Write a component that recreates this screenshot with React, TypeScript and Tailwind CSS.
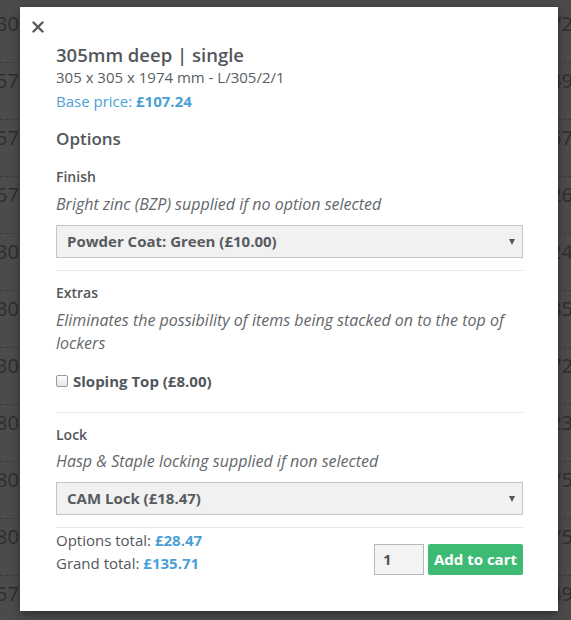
import React from "react";

const leftCol = ["305", "57", "57", "57", "305", "305", "305", "80", "80", "80", "57"];
const rightCol = ["72", "49", "57", "26", "24", "35", "72", "23", "75", "75", "49"];

function Backdrop() {
  return (
    <div className="flex flex-col pt-[6px]">
      {leftCol.map((l, i) => (
        <div
          key={i}
          className="flex h-[57px] items-start justify-between border-b border-dashed border-[#3a3a3a] px-0 pt-[3px] text-[20px] text-[#2e2e2e]"
        >
          <span className="-ml-[4px]">{l}</span>
          <span className="-mr-[2px]">{rightCol[i]}</span>
        </div>
      ))}
    </div>
  );
}

function Select({ label }: { label: string }) {
  return (
    <div className="relative flex h-[33px] items-center border border-[#c4c4c4] bg-[#f1f1f1] pl-[10px] text-[15px] font-bold text-[#575b5f]">
      <span>{label}</span>
      <span className="absolute right-[7px] top-[13px] h-0 w-0 border-x-[3.5px] border-t-[6px] border-x-transparent border-t-[#555]" />
    </div>
  );
}

export default function App() {
  return (
    <div
      className="relative h-[620px] w-[571px] overflow-hidden bg-[#4b4b4b]"
      style={{ fontFamily: '"Open Sans", "Liberation Sans", sans-serif' }}
    >
      <Backdrop />
      <div className="absolute left-[20px] top-[7px] h-[604px] w-[538px] bg-white text-[#53575b] shadow-[0_3px_9px_rgba(0,0,0,0.4)]">
        <button className="absolute left-[7px] top-[9px] flex h-[22px] w-[22px] items-center justify-center">
          <svg width="12" height="12" viewBox="0 0 12 12">
            <path d="M1.5 1.5 L10.5 10.5 M10.5 1.5 L1.5 10.5" stroke="#55595d" strokeWidth="2.4" strokeLinecap="round" />
          </svg>
        </button>
        <div className="flex flex-col pl-[36px] pr-[35px] pt-[37px]">
          <h2 className="text-[18.5px] font-semibold leading-[22px] text-[#53575b]">305mm deep | single</h2>
          <div className="mt-[1px] text-[15px] leading-[20px] text-[#5a5e62]">305 x 305 x 1974 mm - L/305/2/1</div>
          <div className="mt-[4px] text-[15px] leading-[20px] text-[#4a9fd5]">
            Base price: <span className="font-bold">£107.24</span>
          </div>
          <h3 className="mt-[16px] text-[17px] font-semibold leading-[24px]">Options</h3>

          <div className="mt-[16px] text-[14px] font-semibold leading-[20px]">Finish</div>
          <div className="mt-[6px] text-[16px] italic leading-[22px] text-[#63676b]">
            Bright zinc (BZP) supplied if no option selected
          </div>
          <div className="mt-[10px]">
            <Select label="Powder Coat: Green (£10.00)" />
          </div>
          <div className="mt-[12px] h-px bg-[#e6e6e6]" />

          <div className="mt-[12px] text-[14px] font-semibold leading-[20px]">Extras</div>
          <div className="mt-[6px] text-[16px] italic leading-[23px] text-[#63676b]">
            Eliminates the possibility of items being stacked on to the top of lockers
          </div>
          <label className="mt-[16px] flex h-[20px] items-center gap-[5px]">
            <span className="h-[12px] w-[12px] rounded-[2px] border border-[#9a9a9a] bg-gradient-to-b from-white to-[#e4e4e4]" />
            <span className="text-[15px] font-bold">Sloping Top (£8.00)</span>
          </label>
          <div className="mt-[21px] h-px bg-[#e6e6e6]" />

          <div className="mt-[12px] text-[14px] font-semibold leading-[20px]">Lock</div>
          <div className="mt-[5px] text-[16px] italic leading-[22px] text-[#63676b]">
            Hasp &amp; Staple locking supplied if non selected
          </div>
          <div className="mt-[10px]">
            <Select label="CAM Lock (£18.47)" />
          </div>
          <div className="mt-[12px] h-px bg-[#e6e6e6]" />

          <div className="mt-[1px] flex items-end justify-between">
            <div className="flex flex-col text-[15px] leading-[23px]">
              <div>
                Options total: <span className="font-bold text-[#4a9fd5]">£28.47</span>
              </div>
              <div>
                Grand total: <span className="font-bold text-[#4a9fd5]">£135.71</span>
              </div>
            </div>
            <div className="flex items-center gap-[4px]">
              <div className="flex h-[31px] w-[50px] items-center border border-[#b8b8b8] bg-[#f3f3f3] pl-[8px] text-[15px] font-bold text-[#555]">
                1
              </div>
              <button className="h-[31px] w-[95px] rounded-[2px] bg-[#3dba74] text-[15px] font-bold text-white">
                Add to cart
              </button>
            </div>
          </div>
        </div>
      </div>
    </div>
  );
}
